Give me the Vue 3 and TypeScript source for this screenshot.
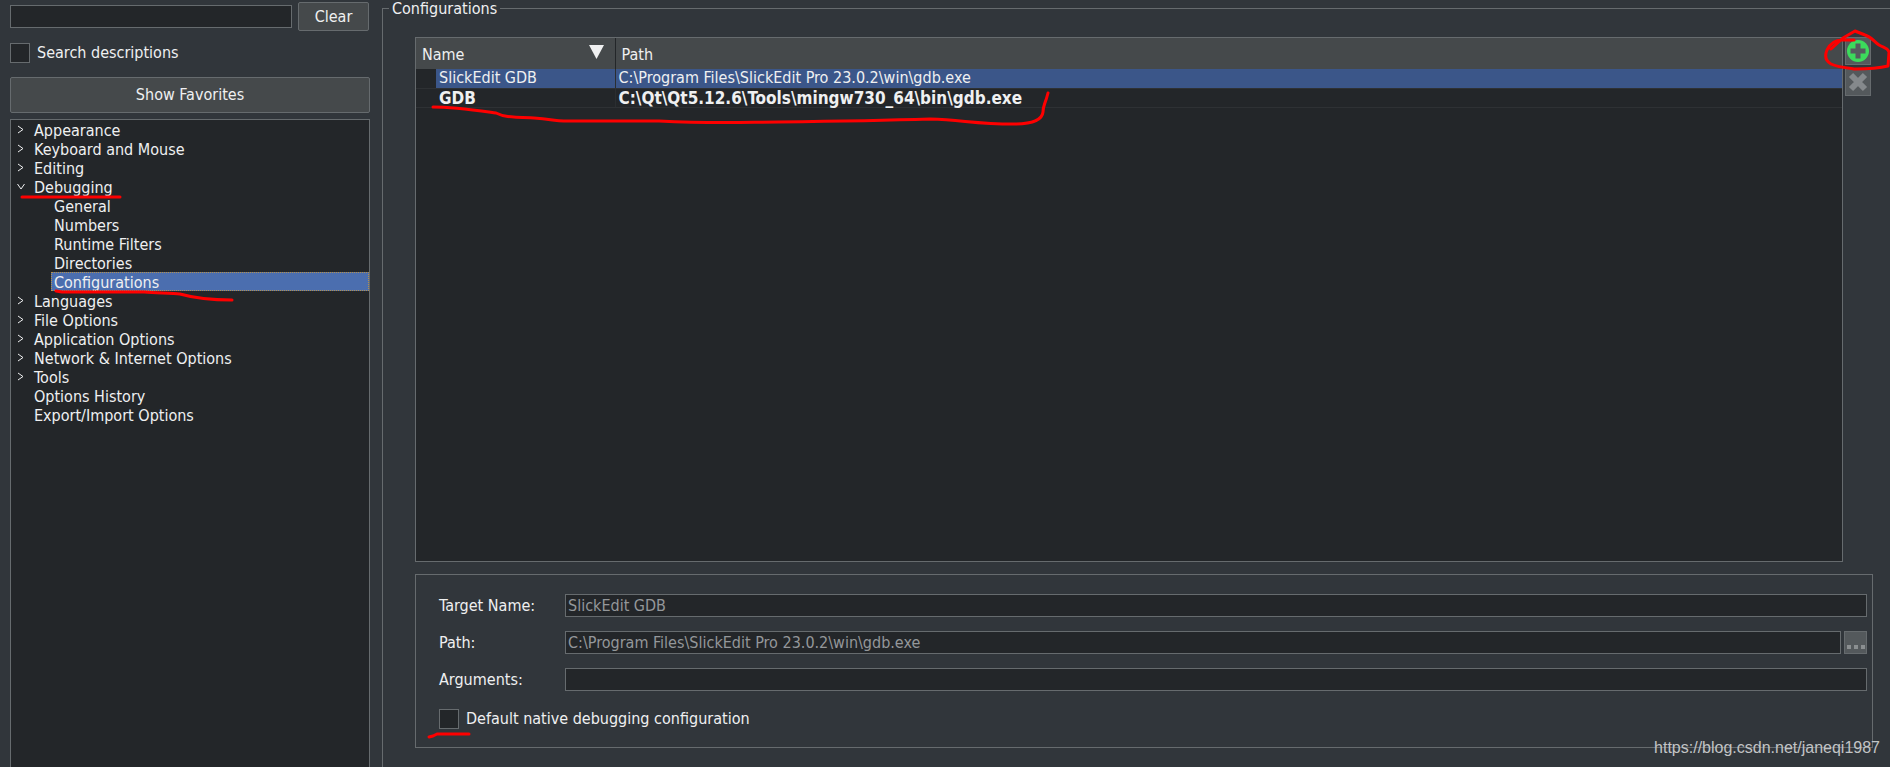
<script setup lang="ts">
import { ref } from 'vue'

interface TreeNode {
  label: string
  depth: number
  arrow: 'right' | 'down' | 'none'
  mark?: 'debugging' | 'configurations'
}

interface DebugConfig {
  name: string
  path: string
  isDefault: boolean
}

const tree: TreeNode[] = [
  { label: 'Appearance', depth: 0, arrow: 'right' },
  { label: 'Keyboard and Mouse', depth: 0, arrow: 'right' },
  { label: 'Editing', depth: 0, arrow: 'right' },
  { label: 'Debugging', depth: 0, arrow: 'down', mark: 'debugging' },
  { label: 'General', depth: 1, arrow: 'none' },
  { label: 'Numbers', depth: 1, arrow: 'none' },
  { label: 'Runtime Filters', depth: 1, arrow: 'none' },
  { label: 'Directories', depth: 1, arrow: 'none' },
  { label: 'Configurations', depth: 1, arrow: 'none', mark: 'configurations' },
  { label: 'Languages', depth: 0, arrow: 'right' },
  { label: 'File Options', depth: 0, arrow: 'right' },
  { label: 'Application Options', depth: 0, arrow: 'right' },
  { label: 'Network & Internet Options', depth: 0, arrow: 'right' },
  { label: 'Tools', depth: 0, arrow: 'right' },
  { label: 'Options History', depth: 0, arrow: 'none' },
  { label: 'Export/Import Options', depth: 0, arrow: 'none' },
]

const configs: DebugConfig[] = [
  { name: 'SlickEdit GDB', path: 'C:\\Program Files\\SlickEdit Pro 23.0.2\\win\\gdb.exe', isDefault: false },
  { name: 'GDB', path: 'C:\\Qt\\Qt5.12.6\\Tools\\mingw730_64\\bin\\gdb.exe', isDefault: true },
]

const selectedNode = ref('Configurations')
const selectedConfig = ref(0)
const search = ref('')
const searchDescriptions = ref(false)
const args = ref('')
const nativeDefault = ref(false)
</script>

<template>
  <div class="window">
    <aside class="sidebar">
      <div class="search-row">
        <input v-model="search" class="field search" type="text" aria-label="Search options" />
        <button class="btn clear" type="button" @click="search = ''">Clear</button>
      </div>
      <label class="check search-check">
        <input v-model="searchDescriptions" type="checkbox" />
        <span>Search descriptions</span>
      </label>
      <button class="btn favorites" type="button">Show Favorites</button>
      <ul class="tree" role="tree">
        <li
          v-for="node in tree"
          :key="node.label"
          class="node"
          role="treeitem"
          :class="{ child: node.depth === 1 }"
          :aria-selected="node.label === selectedNode"
          @click="selectedNode = node.label"
        >
          <span class="twisty">
            <svg v-if="node.arrow === 'right'" width="8" height="10" viewBox="0 0 8 10" aria-hidden="true">
              <path d="M1 1L6 4.500L1 8" />
            </svg>
            <svg v-else-if="node.arrow === 'down'" width="8" height="10" viewBox="0 0 8 10" aria-hidden="true">
              <path d="M0.500 2L4 7L7.500 2" />
            </svg>
          </span>
          <span class="node-label" :class="{ selected: node.label === selectedNode }">{{ node.label }}</span>
          <svg v-if="node.mark === 'debugging'" class="ink ink-debugging" width="104" height="6" viewBox="0 0 104 6" aria-hidden="true">
            <path d="M2 3H100" />
          </svg>
          <svg v-if="node.mark === 'configurations'" class="ink ink-configurations" width="182" height="16" viewBox="0 0 182 16" aria-hidden="true">
            <path d="M2 3L8 4H90C105 5 118 5 126 6C140 10 160 12 178 12" />
          </svg>
        </li>
      </ul>
    </aside>

    <fieldset class="group">
      <legend>Configurations</legend>
      <div class="list-row">
        <div class="list">
          <table>
            <colgroup>
              <col class="col-gutter" />
              <col class="col-name" />
              <col />
            </colgroup>
            <thead>
              <tr>
                <th colspan="2" class="divided" scope="col">
                  <span class="head-name">
                    Name
                    <svg width="15" height="14" viewBox="0 0 15 14" aria-hidden="true">
                      <path d="M0 0H15L7.500 14Z" />
                    </svg>
                  </span>
                </th>
                <th scope="col">Path</th>
              </tr>
            </thead>
            <tbody>
              <tr
                v-for="(config, index) in configs"
                :key="config.name"
                :class="{ current: index === selectedConfig, bold: config.isDefault }"
                @click="selectedConfig = index"
              >
                <td class="gutter"></td>
                <td class="divided">{{ config.name }}</td>
                <td>{{ config.path }}</td>
              </tr>
            </tbody>
          </table>
          <svg class="ink ink-gdb" width="624" height="38" viewBox="0 0 624 38" aria-hidden="true">
            <path d="M4 17C25 17 45 20 67 23C75 27 80 27 105 28C125 29 120 31 140 31H230C290 34 320 32 350 32C430 31 470 30 501 29C535 30 545 34 585 34C602 34 613 31 614 22C614 15 616 15 619 3" />
          </svg>
        </div>
        <div class="tools">
          <button class="tool add" type="button" aria-label="Add configuration">
            <svg width="22" height="22" viewBox="0 0 22 22" aria-hidden="true">
              <circle cx="11" cy="11" r="11" fill="#3cdb5c" />
              <path d="M8.500 3.500H13.500V8.500H18.500V13.500H13.500V18.500H8.500V13.500H3.500V8.500H8.500Z" fill="#565b5e" />
            </svg>
          </button>
          <button class="tool remove" type="button" aria-label="Delete configuration">
            <svg width="20" height="20" viewBox="0 0 20 20" aria-hidden="true">
              <path d="M3 3L17 17M17 3L3 17" fill="none" stroke="#85898c" stroke-width="6" />
            </svg>
          </button>
          <svg class="ink ink-add" width="68" height="44" viewBox="0 0 68 44" aria-hidden="true">
            <path d="M32 12H20C13 12 8 16 5 22C2 29 4 33 9 36C15 39 25 40 33 41C45 41 54 41 66 38L67 24C66 20 62 20 57 17C52 14 50 9 43 7L33 3L21 10L9 21" />
          </svg>
        </div>
      </div>

      <div class="details">
        <label for="target">Target Name:</label>
        <input id="target" class="field" type="text" :value="configs[selectedConfig].name" disabled />
        <label for="path">Path:</label>
        <div class="path-row">
          <input id="path" class="field" type="text" :value="configs[selectedConfig].path" disabled />
          <button class="browse" type="button" aria-label="Browse" disabled>
            <svg width="18" height="4" viewBox="0 0 18 4" aria-hidden="true">
              <path d="M0 0H4V4H0ZM7 0H11V4H7ZM14 0H18V4H14Z" fill="#8b8f91" />
            </svg>
          </button>
        </div>
        <label for="args">Arguments:</label>
        <input id="args" v-model="args" class="field" type="text" />
        <label class="check native-check">
          <input v-model="nativeDefault" type="checkbox" />
          <span>Default native debugging configuration</span>
          <svg class="ink ink-native" width="46" height="8" viewBox="0 0 46 8" aria-hidden="true">
            <path d="M2 6L6 5L10 3H42" />
          </svg>
        </label>
      </div>
    </fieldset>
    <a class="watermark" href="https://blog.csdn.net/janeqi1987">https://blog.csdn.net/janeqi1987</a>
  </div>
</template>

<style>
body {
  margin: 0;
  background: #31363b;
}
</style>

<style scoped>
.window,
.window * {
  box-sizing: border-box;
}

.window {
  --line: #666b6e;
  --well: #232629;
  position: relative;
  display: flex;
  gap: 12px;
  min-height: 100vh;
  padding-left: 10px;
  overflow: hidden;
  background: #31363b;
  color: #eff0f1;
  font-family: "DejaVu Sans Condensed", Tahoma, sans-serif;
  font-size: 16px;
  line-height: 20px;
}

.window input,
.window button {
  margin: 0;
  font: inherit;
  color: inherit;
}

.sidebar {
  display: flex;
  flex: 0 0 360px;
  flex-direction: column;
  padding-top: 2px;
}

.search-row {
  display: flex;
  gap: 6px;
  align-items: center;
  padding-right: 1px;
}

.field {
  width: 100%;
  min-width: 0;
  height: 23px;
  padding: 0 2px;
  border: 1px solid var(--line);
  border-radius: 0;
  background: var(--well);
}

.window .field:disabled {
  color: #94979a;
}

.search {
  flex: 1;
}

.btn {
  border: 1px solid var(--line);
  border-radius: 2px;
  background: #45494b;
}

.clear {
  width: 71px;
  height: 29px;
}

.check {
  display: flex;
  gap: 7px;
  align-items: center;
}

.check input {
  width: 20px;
  height: 20px;
  border: 1px solid var(--line);
  background: var(--well);
  appearance: none;
}

.check input:checked {
  background: #4b6eaf;
}

.search-check {
  margin: 12px 0 14px;
}

.favorites {
  height: 36px;
}

.tree {
  flex: 1;
  margin: 6px 0 0;
  padding: 0;
  border: 1px solid var(--line);
  border-bottom: 0;
  background: var(--well);
  list-style: none;
}

.node {
  position: relative;
  display: flex;
  height: 19px;
  line-height: 21px;
  white-space: nowrap;
}

.twisty {
  display: flex;
  flex: 0 0 20px;
  align-items: center;
  padding-left: 6px;
}

.twisty path {
  fill: none;
  stroke: #eff0f1;
  stroke-width: 1;
}

.child .twisty {
  flex-basis: 40px;
}

.node-label {
  flex: 1;
  padding-left: 3px;
}

.node-label.selected {
  background: #4b6eaf;
  outline: 1px dotted #b4914f;
  outline-offset: -1px;
}

.ink {
  position: absolute;
  z-index: 1;
  pointer-events: none;
}

.ink path {
  fill: none;
  stroke: #fe0000;
  stroke-width: 3;
  stroke-linecap: round;
  stroke-linejoin: round;
}

.ink-debugging {
  top: 17px;
  left: 9px;
}

.ink-configurations {
  top: 16px;
  left: 43px;
}

.group {
  display: flex;
  flex: 1;
  flex-direction: column;
  min-width: 0;
  margin: 0;
  padding: 20px 17px 19px 32px;
  border: 1px solid var(--line);
  border-right: 0;
  border-bottom: 0;
}

.group legend {
  margin-left: -26px;
  padding: 0 3px;
  line-height: 17px;
}

.list-row {
  display: flex;
  flex: 1;
  gap: 2px;
}

.list {
  position: relative;
  flex: 1;
  border: 1px solid var(--line);
  background: var(--well);
}

table {
  width: 100%;
  border-collapse: collapse;
  table-layout: fixed;
}

.col-gutter {
  width: 20px;
}

.col-name {
  width: 179px;
}

th {
  height: 31px;
  padding: 2px 6px 0;
  background: #45494b;
  font-weight: 400;
  text-align: left;
}

.head-name {
  display: flex;
  justify-content: space-between;
  padding-right: 5px;
}

.head-name path {
  fill: #eff0f1;
}

th.divided {
  border-right: 1px solid #232629;
}

td {
  height: 19px;
  padding: 0 3px;
  border-bottom: 1px solid #2e3134;
  line-height: 18px;
  white-space: nowrap;
}

td.divided {
  border-right: 1px solid #2b2e31;
}

.current td:not(.gutter) {
  background: #3b5689;
}

.bold td {
  font-size: 17px;
  font-weight: 700;
}

.ink-gdb {
  top: 52px;
  left: 13px;
}

.tools {
  position: relative;
  display: flex;
  flex: 0 0 28px;
  flex-direction: column;
  gap: 3px;
}

.tool,
.browse {
  display: flex;
  align-items: center;
  justify-content: center;
  padding: 0;
  border: 1px solid var(--line);
  border-radius: 0;
  background: #54595c;
}

.tool {
  width: 26px;
  height: 28px;
}

.ink-add {
  top: -9px;
  left: -23px;
  overflow: visible;
}

.details {
  display: grid;
  grid-template-columns: 126px 1fr;
  row-gap: 14px;
  align-items: center;
  margin-top: 12px;
  padding: 19px 5px 18px 23px;
  border: 1px solid var(--line);
}

.path-row {
  display: flex;
  gap: 3px;
}

.browse {
  flex: 0 0 23px;
  align-items: flex-end;
  padding-bottom: 4px;
}

.native-check {
  position: relative;
  grid-column: 1 / -1;
  margin-top: 4px;
}

.ink-native {
  top: 22px;
  left: -12px;
}

.watermark {
  position: absolute;
  right: 10px;
  bottom: 9px;
  color: #c2c4c6;
  font-family: "Liberation Sans", Arial, sans-serif;
  font-size: 16px;
  text-decoration: none;
}
</style>
